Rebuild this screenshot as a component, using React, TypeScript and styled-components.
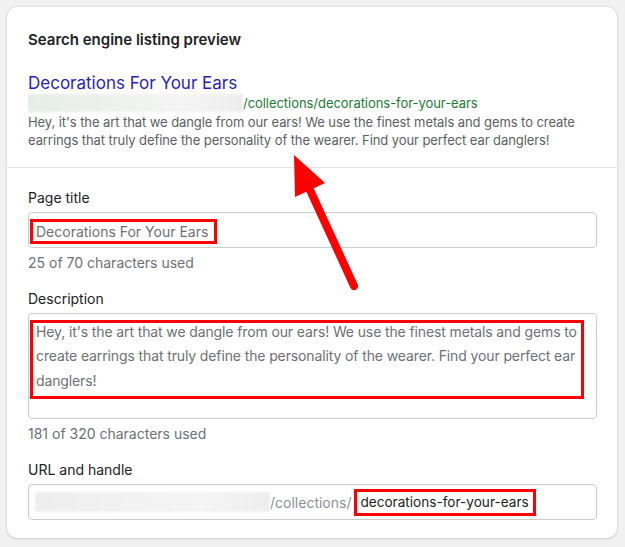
import React from "react";
import styled, { createGlobalStyle } from "styled-components";

const Global = createGlobalStyle`
  html, body { margin: 0; padding: 0; background: #f1f1f1; }
  body { font-family: Inter, "Noto Sans", sans-serif; color: #202223; }
  * { box-sizing: border-box; }
`;

const Page = styled.div`
  padding: 7px 8px 10px 7px;
  position: relative;
`;

const Card = styled.div`
  background: #fff;
  border-radius: 10px;
  box-shadow: 0 0 0 1px rgba(0,0,0,0.04), 0 1px 3px rgba(0,0,0,0.12);
  overflow: hidden;
`;

const Section = styled.div<{ $top: number; $bottom: number; $divider?: boolean }>`
  padding: ${(p) => p.$top}px 20px ${(p) => p.$bottom}px 21px;
  border-top: ${(p) => (p.$divider ? "1px solid #e1e3e5" : "none")};
  display: flex;
  flex-direction: column;
`;

const Heading = styled.h2`
  margin: 0 0 23px;
  font-size: 15px;
  line-height: 20px;
  font-weight: 600;
  color: #202223;
`;

const SerpTitle = styled.div`
  font-size: 17px;
  line-height: 20px;
  color: #2a1fb8;
`;

const SerpUrl = styled.div`
  display: flex;
  align-items: center;
  font-size: 13px;
  letter-spacing: -0.05px;
  line-height: 20px;
  color: #1e7a34;
`;

const Blur = styled.span<{ $w: number; $h: number; $tint: string }>`
  display: inline-block;
  width: ${(p) => p.$w}px;
  height: ${(p) => p.$h}px;
  background: linear-gradient(90deg, ${(p) => p.$tint}, #f4f5f4 70%, #eeeeee);
  filter: blur(1px);
`;

const SerpDesc = styled.p`
  margin: 0;
  font-size: 13px;
  letter-spacing: -0.08px;
  line-height: 18px;
  color: #5c5f62;
`;

const Label = styled.div<{ $mt?: number }>`
  margin-top: ${(p) => p.$mt ?? 0}px;
  font-size: 14px;
  line-height: 20px;
  color: #202223;
  margin-bottom: 4px;
`;

const Field = styled.div<{ $h: number; $pad?: string }>`
  height: ${(p) => p.$h}px;
  border: 1px solid #c9cccf;
  border-radius: 4px;
  padding: ${(p) => p.$pad ?? "6px 12px 6px 1px"};
  display: flex;
  align-items: flex-start;
  width: 569px;
`;

const Mark = styled.span`
  display: inline-block;
  border: 3px solid #f00;
  padding: 0 6px 0 3px;
  font-size: 14px;
  line-height: 19px;
  color: #6d7175;
`;

const MarkBlock = styled.div`
  width: 555px;
  border: 3px solid #f00;
  padding: 0 0 0 3px;
  font-size: 14px;
  letter-spacing: -0.12px;
  line-height: 24.3px;
  color: #6d7175;
`;

const MarkText = styled.div`
  margin: -3px 0 3px;
`;

const UrlRow = styled.div`
  display: flex;
  align-items: center;
  height: 100%;
  padding-left: 6px;
  font-size: 14px;
  color: #8c9196;
`;

const Handle = styled.span`
  margin-left: 3px;
  border: 3px solid #f00;
  padding: 0 4px 0 3px;
  font-size: 13.6px;
  line-height: 21px;
  color: #202223;
`;

const Help = styled.div`
  margin-top: 6px;
  font-size: 14px;
  line-height: 18px;
  color: #6d7175;
`;

const Arrow = styled.svg`
  position: absolute;
  left: 0;
  top: 0;
  pointer-events: none;
`;

export default function App() {
  return (
    <>
      <Global />
      <Page>
        <Card>
          <Section $top={23} $bottom={18}>
            <Heading>Search engine listing preview</Heading>
            <SerpTitle>Decorations For Your Ears</SerpTitle>
            <SerpUrl>
              <Blur $w={215} $h={18} $tint="#e6ede7" />
              /collections/decorations-for-your-ears
            </SerpUrl>
            <SerpDesc>
              Hey, it's the art that we dangle from our ears! We use the finest metals and gems to create earrings that
              truly define the personality of the wearer. Find your perfect ear danglers!
            </SerpDesc>
          </Section>
          <Section $top={20} $bottom={18} $divider>
            <Label>Page title</Label>
            <Field $h={36}>
              <Mark>Decorations For Your Ears</Mark>
            </Field>
            <Help>25 of 70 characters used</Help>
            <Label $mt={17}>Description</Label>
            <Field $h={106}>
              <MarkBlock>
                <MarkText>
                  Hey, it's the art that we dangle from our ears! We use the finest metals and gems to create earrings
                  that truly define the personality of the wearer. Find your perfect ear danglers!
                </MarkText>
              </MarkBlock>
            </Field>
            <Help>181 of 320 characters used</Help>
            <Label $mt={17}>URL and handle</Label>
            <Field $h={36} $pad="0">
              <UrlRow>
                <Blur $w={235} $h={20} $tint="#eeeeee" />
                /collections/
                <Handle>decorations-for-your-ears</Handle>
              </UrlRow>
            </Field>
          </Section>
        </Card>
        <Arrow width="625" height="547" viewBox="0 0 625 547">
          <line x1="310" y1="190" x2="354" y2="286" stroke="#ff0000" strokeWidth="8" strokeLinecap="round" />
          <polygon points="294,155 295,197 325,183" fill="#ff0000" />
        </Arrow>
      </Page>
    </>
  );
}
